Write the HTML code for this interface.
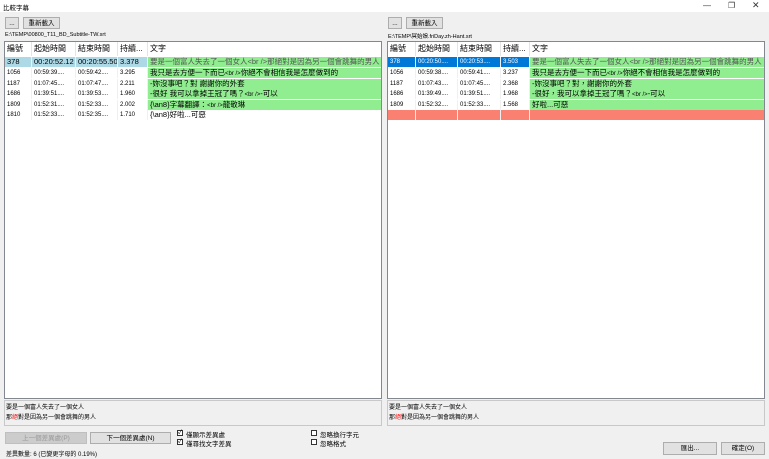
<!DOCTYPE html>
<html><head><meta charset="utf-8"><style>
*{margin:0;padding:0;box-sizing:border-box}
body{width:769px;height:459px;background:#f0f0f0;font-family:"Liberation Sans","Noto Sans CJK TC",sans-serif;font-size:7px;color:#000;position:relative;overflow:hidden}
.a{position:absolute}
.title{left:0;top:0;width:769px;height:12px;background:#fff}
.btn{position:absolute;background:#e1e1e1;border:1px solid #adadad;font-size:6.5px;text-align:center;line-height:11px}
.list{position:absolute;background:#fff;border:1px solid #828790;overflow:hidden}
.row{position:absolute;left:0;right:0;height:10px;white-space:nowrap}
.c{position:absolute;top:0;height:10px;line-height:10px;padding-left:2px;overflow:hidden;border-right:1px solid #f0f0f0}
.hd .c{height:14px;line-height:14px;font-size:8px;border-right:1px solid #e5e5e5}
.g{background:#90ee90}
.cb{position:absolute;width:6px;height:6px;border:1px solid #333;background:#fff;font-size:6px;line-height:5px;text-align:center}
.txt{position:absolute;background:#f0f0f0;border:1px solid #c8c8c8;font-size:6px;padding:2px 1px;line-height:10px}
</style></head><body>
<div class="a title"></div>
<div class="a" style="left:3px;top:2px;font-size:6.5px">比較字幕</div>
<div class="a" style="left:703px;top:1px;font-size:8px;color:#333">—</div>
<div class="a" style="left:728px;top:1px;font-size:8px;color:#333">❐</div>
<div class="a" style="left:752px;top:0px;font-size:9px;color:#333">✕</div>

<div class="btn" style="left:5px;top:17px;width:14px;height:12px">...</div>
<div class="btn" style="left:23px;top:17px;width:37px;height:12px">重新載入</div>
<div class="a" style="left:5px;top:32px;font-size:5.5px">E:\TEMP\00800_T11_BD_Subtitle-TW.srt</div>
<div class="btn" style="left:388px;top:17px;width:14px;height:12px">...</div>
<div class="btn" style="left:406px;top:17px;width:37px;height:12px">重新載入</div>
<div class="a" style="left:388px;top:32px;font-size:5.5px">E:\TEMP\冥始娘.friDay.zh-Hant.srt</div>

<div class="list" style="left:4px;top:41px;width:378px;height:358px">
 <div class="row hd" style="top:0;height:14px"><div class="c" style="left:0;width:27px">編號</div><div class="c" style="left:27px;width:44px">起始時間</div><div class="c" style="left:71px;width:42px">結束時間</div><div class="c" style="left:113px;width:30px">持續...</div><div class="c" style="left:143px;width:240px">文字</div></div>
 <div class="row" style="top:15px;font-size:7.5px"><div class="c" style="left:0;width:27px;background:#add8e6">378</div><div class="c" style="left:27px;width:44px;background:#add8e6">00:20:52.12</div><div class="c" style="left:71px;width:42px;background:#add8e6">00:20:55.50</div><div class="c" style="left:113px;width:30px;background:#add8e6">3.378</div><div class="c g" style="left:143px;width:240px;color:#555">要是一個富人失去了一個女人&lt;br /&gt;那絕對是因為另一個會跳舞的男人</div></div>
 <div class="row" style="top:26px;font-size:6px"><div class="c" style="left:0;width:27px">1056</div><div class="c" style="left:27px;width:44px">00:59:39....</div><div class="c" style="left:71px;width:42px">00:59:42....</div><div class="c" style="left:113px;width:30px">3.295</div><div class="c g" style="left:143px;width:240px;font-size:7.5px">我只是去方便一下而已<span style="font-size:6px">&lt;br /&gt;</span>你絕不會相信我是怎麼做到的</div></div>
 <div class="row" style="top:36.5px;font-size:6px"><div class="c" style="left:0;width:27px">1187</div><div class="c" style="left:27px;width:44px">01:07:45....</div><div class="c" style="left:71px;width:42px">01:07:47....</div><div class="c" style="left:113px;width:30px">2.211</div><div class="c g" style="left:143px;width:240px;font-size:7.5px">-妳沒事吧？對 謝謝你的外套</div></div>
 <div class="row" style="top:47px;font-size:6px"><div class="c" style="left:0;width:27px">1686</div><div class="c" style="left:27px;width:44px">01:39:51....</div><div class="c" style="left:71px;width:42px">01:39:53....</div><div class="c" style="left:113px;width:30px">1.960</div><div class="c g" style="left:143px;width:240px;font-size:7.5px">-很好 我可以拿掉王冠了嗎？<span style="font-size:6px">&lt;br /&gt;</span>-可以</div></div>
 <div class="row" style="top:57.5px;font-size:6px"><div class="c" style="left:0;width:27px">1809</div><div class="c" style="left:27px;width:44px">01:52:31....</div><div class="c" style="left:71px;width:42px">01:52:33....</div><div class="c" style="left:113px;width:30px">2.002</div><div class="c g" style="left:143px;width:240px;font-size:7.5px">{\an8}字幕翻譯：<span style="font-size:6px">&lt;br /&gt;</span>龍敬琳</div></div>
 <div class="row" style="top:68px;font-size:6px"><div class="c" style="left:0;width:27px">1810</div><div class="c" style="left:27px;width:44px">01:52:33....</div><div class="c" style="left:71px;width:42px">01:52:35....</div><div class="c" style="left:113px;width:30px">1.710</div><div class="c" style="left:143px;width:240px;font-size:7.5px">{\an8}好啦...可惡</div></div>
</div>

<div class="list" style="left:387px;top:41px;width:378px;height:358px">
 <div class="row hd" style="top:0;height:14px"><div class="c" style="left:0;width:28px">編號</div><div class="c" style="left:28px;width:42px">起始時間</div><div class="c" style="left:70px;width:43px">結束時間</div><div class="c" style="left:113px;width:29px">持續...</div><div class="c" style="left:142px;width:240px">文字</div></div>
 <div class="row" style="top:15px;font-size:6px;color:#fff"><div class="c" style="left:0;width:28px;background:#0078d7">378</div><div class="c" style="left:28px;width:42px;background:#0078d7">00:20:50....</div><div class="c" style="left:70px;width:43px;background:#0078d7">00:20:53....</div><div class="c" style="left:113px;width:29px;background:#0078d7">3.503</div><div class="c g" style="left:142px;width:240px;color:#555;font-size:7.5px">要是一個富人失去了一個女人&lt;br /&gt;那絕對是因為另一個會跳舞的男人</div></div>
 <div class="row" style="top:26px;font-size:6px"><div class="c" style="left:0;width:28px">1056</div><div class="c" style="left:28px;width:42px">00:59:38....</div><div class="c" style="left:70px;width:43px">00:59:41....</div><div class="c" style="left:113px;width:29px">3.237</div><div class="c g" style="left:142px;width:240px;font-size:7.5px">我只是去方便一下而已<span style="font-size:6px">&lt;br /&gt;</span>你絕不會相信我是怎麼做到的</div></div>
 <div class="row" style="top:36.5px;font-size:6px"><div class="c" style="left:0;width:28px">1187</div><div class="c" style="left:28px;width:42px">01:07:43....</div><div class="c" style="left:70px;width:43px">01:07:45....</div><div class="c" style="left:113px;width:29px">2.368</div><div class="c g" style="left:142px;width:240px;font-size:7.5px">-妳沒事吧？對，謝謝你的外套</div></div>
 <div class="row" style="top:47px;font-size:6px"><div class="c" style="left:0;width:28px">1686</div><div class="c" style="left:28px;width:42px">01:39:49....</div><div class="c" style="left:70px;width:43px">01:39:51....</div><div class="c" style="left:113px;width:29px">1.968</div><div class="c g" style="left:142px;width:240px;font-size:7.5px">-很好，我可以拿掉王冠了嗎？<span style="font-size:6px">&lt;br /&gt;</span>-可以</div></div>
 <div class="row" style="top:57.5px;font-size:6px"><div class="c" style="left:0;width:28px">1809</div><div class="c" style="left:28px;width:42px">01:52:32....</div><div class="c" style="left:70px;width:43px">01:52:33....</div><div class="c" style="left:113px;width:29px">1.568</div><div class="c g" style="left:142px;width:240px;font-size:7.5px">好啦...可惡</div></div>
 <div class="row" style="top:68px;background:#fa8072"><div class="c" style="left:0;width:28px"></div><div class="c" style="left:28px;width:42px"></div><div class="c" style="left:70px;width:43px"></div><div class="c" style="left:113px;width:29px"></div></div>
</div>

<div class="txt" style="left:4px;top:400px;width:378px;height:26px">要是一個富人失去了一個女人<br>那<span style="color:#f00">絕</span>對是因為另一個會跳舞的男人</div>
<div class="txt" style="left:387px;top:400px;width:378px;height:26px">要是一個富人失去了一個女人<br>那<span style="color:#f00">絕</span>對是因為另一個會跳舞的男人</div>

<div class="btn" style="left:5px;top:432px;width:82px;height:12px;color:#999;background:#ccc;border-color:#bfbfbf">上一個差異處(P)</div>
<div class="btn" style="left:90px;top:432px;width:81px;height:12px">下一個差異處(N)</div>
<div class="cb" style="left:177px;top:430px">✓</div><div class="a" style="left:186px;top:429px;font-size:6.5px">僅顯示差異處</div>
<div class="cb" style="left:177px;top:439px">✓</div><div class="a" style="left:186px;top:438px;font-size:6.5px">僅尋找文字差異</div>
<div class="cb" style="left:311px;top:430px"></div><div class="a" style="left:320px;top:429px;font-size:6.5px">忽略換行字元</div>
<div class="cb" style="left:311px;top:439px"></div><div class="a" style="left:320px;top:438px;font-size:6.5px">忽略格式</div>
<div class="a" style="left:6px;top:449px;font-size:6px">差異數量: 6 (已變更字母的 0.19%)</div>
<div class="btn" style="left:663px;top:442px;width:54px;height:13px">匯出...</div>
<div class="btn" style="left:721px;top:442px;width:44px;height:13px">確定(O)</div>
</body></html>
